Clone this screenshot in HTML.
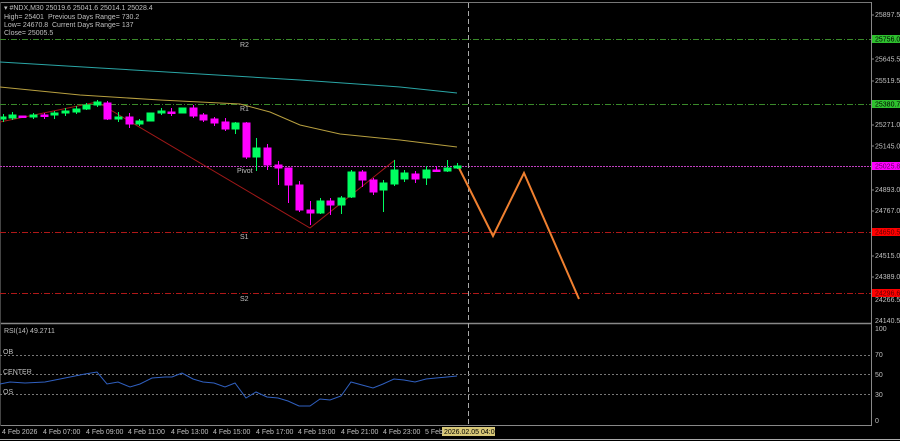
<!DOCTYPE html>
<html><head><meta charset="utf-8"><style>
html,body{margin:0;padding:0;background:#000;width:900px;height:441px;overflow:hidden}
svg{display:block}
text{font-family:"Liberation Sans",sans-serif;font-size:7px;fill:#c0c0c0}
</style></head><body>
<svg width="900" height="441" viewBox="0 0 900 441" xmlns="http://www.w3.org/2000/svg">
<rect width="900" height="441" fill="#000"/>
<line x1="0" y1="2.5" x2="871" y2="2.5" stroke="#777" stroke-width="1"/>
<line x1="871.5" y1="2" x2="871.5" y2="426" stroke="#888"/>
<line x1="0" y1="323.5" x2="871" y2="323.5" stroke="#888" stroke-width="1.5"/>
<line x1="0" y1="425.5" x2="871" y2="425.5" stroke="#888"/>
<line x1="0" y1="439.5" x2="900" y2="439.5" stroke="#aaa"/>
<line x1="0.5" y1="2" x2="0.5" y2="426" stroke="#444"/>
<g stroke-width="1" fill="none">
<line x1="0" y1="39.5" x2="871" y2="39.5" stroke="#3a8a2a" stroke-dasharray="6,2,1,2"/>
<line x1="0" y1="104.5" x2="871" y2="104.5" stroke="#3a8a2a" stroke-dasharray="6,2,1,2"/>
<line x1="0" y1="166.5" x2="871" y2="166.5" stroke="#c040c0" stroke-dasharray="2,1"/>
<line x1="0" y1="232.5" x2="871" y2="232.5" stroke="#b01818" stroke-dasharray="6,2,1,2"/>
<line x1="0" y1="293.5" x2="871" y2="293.5" stroke="#b01818" stroke-dasharray="6,2,1,2"/>
<line x1="468.5" y1="3" x2="468.5" y2="432" stroke="#aaa" stroke-dasharray="5,3"/>
<polyline points="0,62 100,68 200,74 300,80 400,87 457,93" stroke="#2aa6a6"/>
<polyline points="0,87 80,95 160,100 240,104 270,112 300,125 340,134 400,140 457,147" stroke="#b8a040"/>
<polyline points="0,122 97,102 310,228 395,160" stroke="#a01818"/>
<polyline points="458,166 493,236 524,173 579,299" stroke="#f08030" stroke-width="2"/>
</g>
<text x="240" y="47">R2</text>
<text x="240" y="111">R1</text>
<text x="237" y="173">Pivot</text>
<text x="240" y="239">S1</text>
<text x="240" y="301">S2</text>
<g stroke-width="1">
<g stroke="#00ff60" fill="#00ff60">
<line x1="3.5" y1="114" x2="3.5" y2="122"/><rect x="1" y="117" width="5" height="2"/>
<line x1="12.5" y1="112" x2="12.5" y2="120"/><rect x="9" y="115" width="7" height="3"/>
<line x1="33.5" y1="113" x2="33.5" y2="119"/><rect x="30" y="115" width="7" height="2"/>
<line x1="54.5" y1="111" x2="54.5" y2="119"/><rect x="51" y="113" width="7" height="2"/>
<line x1="65.5" y1="108" x2="65.5" y2="116"/><rect x="62" y="111" width="7" height="2"/>
<line x1="76.5" y1="106" x2="76.5" y2="114"/><rect x="73" y="109" width="7" height="3"/>
<line x1="86.5" y1="103" x2="86.5" y2="110"/><rect x="83" y="105" width="7" height="4"/>
<line x1="97.5" y1="100" x2="97.5" y2="107"/><rect x="94" y="102" width="7" height="3"/>
<line x1="118.5" y1="112" x2="118.5" y2="122"/><rect x="115" y="117" width="7" height="2"/>
<line x1="139.5" y1="119" x2="139.5" y2="126"/><rect x="136" y="121" width="7" height="3"/>
<rect x="147" y="113" width="7" height="8"/>
<line x1="161.5" y1="108" x2="161.5" y2="115"/><rect x="158" y="111" width="7" height="2"/>
<rect x="179" y="108" width="7" height="5"/>
<line x1="235.5" y1="122" x2="235.5" y2="134"/><rect x="232" y="123" width="7" height="6"/>
<line x1="256.5" y1="138" x2="256.5" y2="171"/><rect x="253" y="148" width="7" height="9"/>
<line x1="320.5" y1="198" x2="320.5" y2="214"/><rect x="317" y="201" width="7" height="12"/>
<line x1="341.5" y1="196" x2="341.5" y2="214"/><rect x="338" y="198" width="7" height="7"/>
<line x1="351.5" y1="170" x2="351.5" y2="198"/><rect x="348" y="172" width="7" height="25"/>
<line x1="383.5" y1="180" x2="383.5" y2="212"/><rect x="380" y="183" width="7" height="7"/>
<line x1="394.5" y1="160" x2="394.5" y2="186"/><rect x="391" y="170" width="7" height="14"/>
<line x1="404.5" y1="170" x2="404.5" y2="182"/><rect x="401" y="173" width="7" height="6"/>
<line x1="426.5" y1="166" x2="426.5" y2="185"/><rect x="423" y="170" width="7" height="8"/>
<line x1="447.5" y1="160" x2="447.5" y2="172"/><rect x="444" y="168" width="7" height="3"/>
<line x1="457.5" y1="163" x2="457.5" y2="169"/><rect x="454" y="166" width="7" height="2"/>
</g>
<g stroke="#ff00ff" fill="#ff00ff">
<rect x="19" y="116" width="7" height="1.5"/>
<line x1="44.5" y1="113" x2="44.5" y2="119"/><rect x="41" y="115" width="7" height="1.5"/>
<line x1="107.5" y1="101" x2="107.5" y2="120"/><rect x="104" y="103" width="7" height="16"/>
<line x1="129.5" y1="113" x2="129.5" y2="128"/><rect x="126" y="117" width="7" height="7"/>
<line x1="171.5" y1="108" x2="171.5" y2="116"/><rect x="168" y="112" width="7" height="1.5"/>
<line x1="193.5" y1="105" x2="193.5" y2="118"/><rect x="190" y="108" width="7" height="8"/>
<line x1="203.5" y1="113" x2="203.5" y2="122"/><rect x="200" y="115" width="7" height="5"/>
<line x1="214.5" y1="117" x2="214.5" y2="126"/><rect x="211" y="119" width="7" height="4"/>
<line x1="225.5" y1="118" x2="225.5" y2="131"/><rect x="222" y="122" width="7" height="7"/>
<line x1="246.5" y1="122" x2="246.5" y2="159"/><rect x="243" y="123" width="7" height="34"/>
<line x1="267.5" y1="144" x2="267.5" y2="170"/><rect x="264" y="148" width="7" height="17"/>
<line x1="278.5" y1="161" x2="278.5" y2="185"/><rect x="275" y="165" width="7" height="3"/>
<line x1="288.5" y1="168" x2="288.5" y2="203"/><rect x="285" y="168" width="7" height="17"/>
<line x1="299.5" y1="181" x2="299.5" y2="212"/><rect x="296" y="185" width="7" height="25"/>
<line x1="310.5" y1="201" x2="310.5" y2="225"/><rect x="307" y="210" width="7" height="3"/>
<line x1="330.5" y1="198" x2="330.5" y2="215"/><rect x="327" y="201" width="7" height="4"/>
<line x1="362.5" y1="170" x2="362.5" y2="187"/><rect x="359" y="172" width="7" height="8"/>
<line x1="373.5" y1="178" x2="373.5" y2="195"/><rect x="370" y="180" width="7" height="12"/>
<line x1="415.5" y1="171" x2="415.5" y2="183"/><rect x="412" y="174" width="7" height="5"/>
<line x1="436.5" y1="166" x2="436.5" y2="172"/><rect x="433" y="170" width="7" height="1.5"/>
</g>
</g>
<text x="4" y="10">▾ #NDX,M30  25019.6 25041.6 25014.1 25028.4</text>
<text x="4" y="19">High= 25401</text><text x="48" y="19">Previous Days Range= 730.2</text>
<text x="4" y="27">Low= 24670.8</text><text x="52" y="27">Current Days Range= 137</text>
<text x="4" y="35">Close= 25005.5</text>
<g>
<rect x="872" y="35" width="28" height="8" fill="#2ec02e"/>
<rect x="872" y="100" width="28" height="8" fill="#2ec02e"/>
<rect x="872" y="162" width="28" height="8" fill="#ff00ff"/>
<rect x="872" y="228" width="28" height="8" fill="#ff0000"/>
<rect x="872" y="289" width="28" height="8" fill="#ff0000"/>
</g>
<g font-size="6.5">
<text x="875" y="17">25897.5</text>
<text x="875" y="41.5" style="fill:#000">25756.0</text>
<text x="875" y="61.5">25645.5</text>
<text x="875" y="83">25519.5</text>
<text x="875" y="106.5" style="fill:#000">25380.7</text>
<text x="875" y="127">25271.0</text>
<text x="875" y="148.5">25145.0</text>
<text x="875" y="168.5" style="fill:#600060">25025.8</text>
<text x="875" y="192">24893.0</text>
<text x="875" y="213">24767.0</text>
<text x="875" y="234.5" style="fill:#600000">24650.5</text>
<text x="875" y="258">24515.0</text>
<text x="875" y="279">24389.0</text>
<text x="875" y="295.5" style="fill:#600000">24296.6</text>
<text x="875" y="302">24266.5</text>
<text x="875" y="323">24140.5</text>
<text x="875" y="331">100</text>
<text x="875" y="357">70</text>
<text x="875" y="377">50</text>
<text x="875" y="397">30</text>
<text x="875" y="423">0</text>
</g>
<g stroke="#888" stroke-width="1">
<line x1="871" y1="15" x2="874" y2="15"/><line x1="871" y1="59" x2="874" y2="59"/><line x1="871" y1="81" x2="874" y2="81"/><line x1="871" y1="125" x2="874" y2="125"/><line x1="871" y1="146" x2="874" y2="146"/><line x1="871" y1="190" x2="874" y2="190"/><line x1="871" y1="211" x2="874" y2="211"/><line x1="871" y1="256" x2="874" y2="256"/><line x1="871" y1="277" x2="874" y2="277"/>
</g>
<g stroke="#777" stroke-dasharray="2,2">
<line x1="0" y1="355.5" x2="871" y2="355.5"/>
<line x1="0" y1="374.5" x2="871" y2="374.5"/>
<line x1="0" y1="394.5" x2="871" y2="394.5"/>
</g>
<text x="4" y="333">RSI(14) 49.2711</text>
<text x="3" y="354">OB</text>
<text x="3" y="374">CENTER</text>
<text x="3" y="394">OS</text>
<polyline fill="none" stroke="#3060c0" stroke-width="1" points="0,384 10,382 25,383 45,382 55,380 70,377 85,374 97,372 107,384 118,382 130,387 140,384 152,378 165,377 172,377 182,373 193,379 203,382 214,383 225,387 235,383 246,398 256,392 267,397 278,398 288,401 299,406 310,406 320,399 330,400 341,396 351,382 362,385 373,388 383,384 394,379 404,380 415,382 426,379 436,378 447,377 457,376"/>
<rect x="442" y="427" width="53" height="9" fill="#d8c878"/>
<g font-size="6.5">
<text x="2" y="434">4 Feb 2026</text>
<text x="43" y="434">4 Feb 07:00</text>
<text x="86" y="434">4 Feb 09:00</text>
<text x="128" y="434">4 Feb 11:00</text>
<text x="171" y="434">4 Feb 13:00</text>
<text x="213" y="434">4 Feb 15:00</text>
<text x="256" y="434">4 Feb 17:00</text>
<text x="298" y="434">4 Feb 19:00</text>
<text x="341" y="434">4 Feb 21:00</text>
<text x="383" y="434">4 Feb 23:00</text>
<text x="425" y="434">5 Feb</text>
<text x="444" y="434" style="fill:#000">2026.02.05 04:00</text>
</g>
</svg>
</body></html>
